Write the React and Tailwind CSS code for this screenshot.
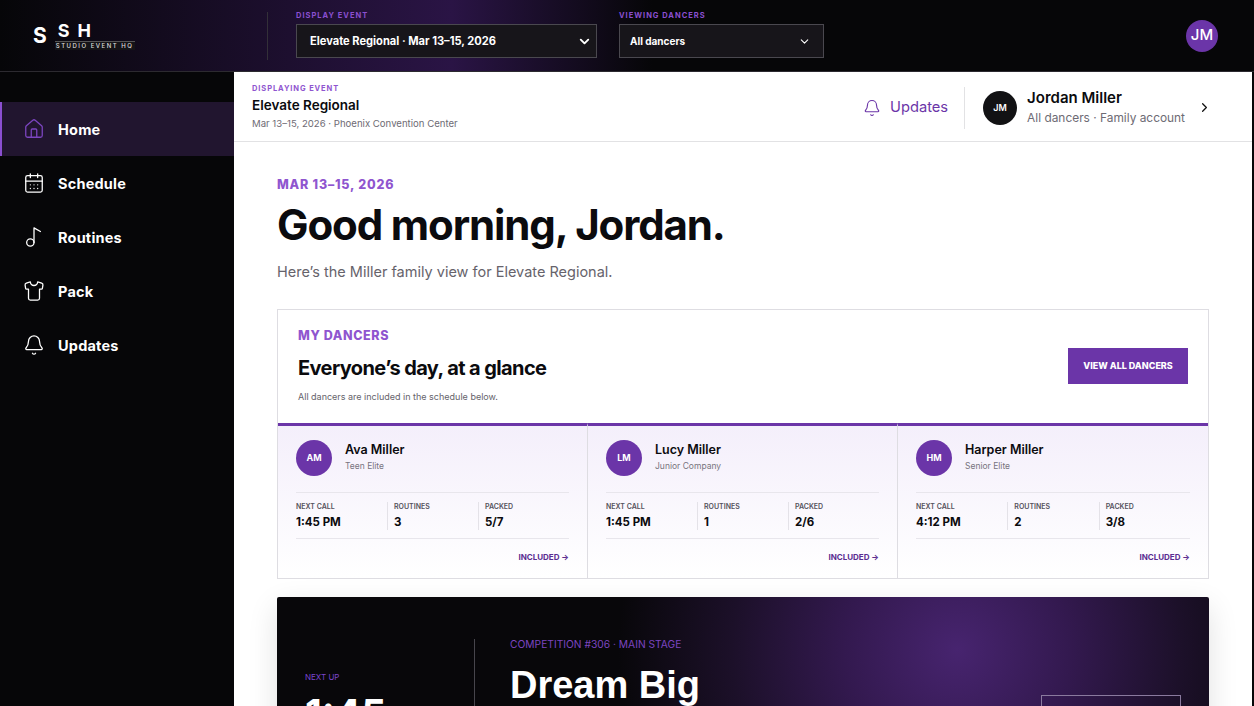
import React from "react";
import { House, CalendarDays, Music2, Shirt, Bell, ChevronDown, ChevronRight } from "lucide-react";

const navItems = [
  { label: "Home", icon: House, active: true },
  { label: "Schedule", icon: CalendarDays },
  { label: "Routines", icon: Music2 },
  { label: "Pack", icon: Shirt },
  { label: "Updates", icon: Bell },
];

const dancers = [
  { initials: "AM", name: "Ava Miller", team: "Teen Elite", call: "1:45 PM", routines: "3", packed: "5/7" },
  { initials: "LM", name: "Lucy Miller", team: "Junior Company", call: "1:45 PM", routines: "1", packed: "2/6" },
  { initials: "HM", name: "Harper Miller", team: "Senior Elite", call: "4:12 PM", routines: "2", packed: "3/8" },
];

const Stat = ({ label, value, first }) => (
  <div className={first ? "" : "border-l border-[#e4e2e8] pl-[6px]"}>
    <div className="text-[7px] leading-[10px] font-semibold text-[#55525c]">{label}</div>
    <div className="mt-[3px] text-[11.5px] leading-[15px] font-bold text-[#0b0b0e]">{value}</div>
  </div>
);

const DancerCard = ({ dancer, last }) => (
  <div className={`border-t-[3px] border-[#6b35a8] bg-gradient-to-b from-[#f4effb] to-white px-[18px] pt-[14px] pb-[16px] ${last ? "" : "border-r border-r-[#dedde2]"}`}>
    <div className="flex items-start gap-[13px]">
      <div className="flex h-9 w-9 items-center justify-center rounded-full bg-[#6b35a8] text-[9px] font-bold text-white">{dancer.initials}</div>
      <div className="pt-px">
        <div className="text-[12.5px] leading-[18px] font-semibold text-[#0b0b0e]">{dancer.name}</div>
        <div className="text-[8.5px] leading-[14px] text-[#77747e]">{dancer.team}</div>
      </div>
    </div>
    <div className="mt-[16px] grid grid-cols-3 border-y border-[#e8e6ec] pt-[9px] pb-[8px]">
      <Stat first label="NEXT CALL" value={dancer.call} />
      <Stat label="ROUTINES" value={dancer.routines} />
      <Stat label="PACKED" value={dancer.packed} />
    </div>
    <div className="mt-[13px] text-right text-[8px] leading-[10px] font-bold text-[#5b2d91]">INCLUDED →</div>
  </div>
);

export default function App() {
  return (
    <div className="flex h-screen flex-col overflow-hidden bg-[#060608] font-['Inter',sans-serif]">
      {/* Top bar */}
      <header className="flex h-[72px] shrink-0 items-center border-b border-[#2c2a30] bg-[linear-gradient(90deg,#060608_0%,#2a1445_36%,#060608_52%,#060608_100%)] pr-[36px]">
        <div className="flex w-[267px] shrink-0 items-center pl-[33px]">
          <span className="text-[21px] leading-none font-bold text-white">S</span>
          <div className="ml-[8px] flex flex-col">
            <span className="pl-[3px] text-[18px] leading-[17px] font-bold tracking-[8px] text-white">SH</span>
            <span className="mt-[2px] w-[80px] border-t border-[#555] bg-[#151417] pl-[1px] text-[6px] leading-[8px] font-medium tracking-[1.5px] whitespace-nowrap text-[#ddd]">STUDIO EVENT HQ</span>
          </div>
        </div>
        <div className="h-[48px] w-px bg-[#333038]" />
        <div className="ml-[28px] w-[301px] pb-[2px]">
          <div className="text-[7.5px] leading-[10px] font-bold tracking-[1px] text-[#8a4fd0]">DISPLAY EVENT</div>
          <div className="mt-[3px] flex h-[34px] items-center justify-between border border-[#4a484f] bg-[#17151a] pr-[4px] pl-[13px]">
            <span className="text-[11.1px] font-bold text-white">Elevate Regional · Mar 13–15, 2026</span>
            <ChevronDown size={15} strokeWidth={3} className="text-white" />
          </div>
        </div>
        <div className="ml-[22px] w-[205px] pb-[2px]">
          <div className="text-[7.5px] leading-[10px] font-bold tracking-[1px] text-[#8a4fd0]">VIEWING DANCERS</div>
          <div className="mt-[3px] flex h-[34px] items-center justify-between border border-[#4a484f] bg-[#17151a] pr-[12px] pl-[10px]">
            <span className="text-[10px] font-bold text-white">All dancers</span>
            <ChevronDown size={13} className="text-white" />
          </div>
        </div>
        <div className="ml-auto flex h-8 w-8 items-center justify-center rounded-full bg-[#6b35a8] text-[15px] font-medium text-white">JM</div>
      </header>

      <div className="flex min-h-0 flex-1 pr-[2px]">
        {/* Sidebar */}
        <aside className="w-[234px] shrink-0 bg-[#060608] pt-[30px]">
          {navItems.map((item) => {
            const Icon = item.icon;
            return (
              <div
                key={item.label}
                className={`flex h-[54px] items-center gap-[13px] ${item.active ? "border-l-2 border-[#8a4fd0] bg-[#21152f] pl-[21px]" : "pl-[23px]"}`}
              >
                <Icon size={22} strokeWidth={1.4} className={item.active ? "text-[#7c45c0]" : "text-white"} />
                <span className="pt-[2px] text-[14.5px] font-bold tracking-[0.2px] text-white">{item.label}</span>
              </div>
            );
          })}
        </aside>

        <main className="min-w-0 flex-1 overflow-hidden bg-white">
          {/* Event strip */}
          <div className="flex h-[70px] items-center justify-between border-b border-[#e2e2e4] pr-[40px] pl-[18px]">
            <div className="pt-px">
              <div className="text-[7.5px] leading-[10px] font-bold tracking-[0.9px] text-[#8f55cf]">DISPLAYING EVENT</div>
              <div className="mt-[1px] text-[13.5px] leading-[20px] font-semibold text-[#0b0b0e]">Elevate Regional</div>
              <div className="mt-[2px] text-[9.6px] leading-[14px] text-[#6e6b74]">Mar 13–15, 2026 · Phoenix Convention Center</div>
            </div>
            <div className="flex items-center pt-[2px]">
              <Bell size={18} strokeWidth={1.5} className="text-[#6b35a8]" />
              <span className="ml-[9px] text-[14.7px] text-[#6b35a8]">Updates</span>
              <div className="ml-[16px] h-[42px] w-px bg-[#e2e2e4]" />
              <div className="ml-[18px] flex h-[34px] w-[34px] items-center justify-center rounded-full bg-[#121214] text-[9px] font-semibold text-white">JM</div>
              <div className="ml-[10px]">
                <div className="text-[15px] leading-[20px] font-semibold text-[#0b0b0e]">Jordan Miller</div>
                <div className="mt-px text-[11.9px] leading-[18px] text-[#6e6b74]">All dancers · Family account</div>
              </div>
              <ChevronRight size={15} strokeWidth={2} className="ml-[12px] text-[#111]" />
            </div>
          </div>

          <div className="px-[43px] pt-[35px]">
            <div className="text-[12.5px] leading-[16px] font-extrabold tracking-[0.8px] text-[#8f55cf]">MAR 13–15, 2026</div>
            <h1 className="mt-[7px] text-[42px] leading-[50px] font-bold tracking-[-1.12px] text-[#0b0b0e]">Good morning, Jordan.</h1>
            <p className="mt-[12px] text-[14.5px] leading-[20px] text-[#66636b]">Here’s the Miller family view for Elevate Regional.</p>

            {/* My dancers */}
            <section className="mt-[27px] border border-[#dedde2]">
              <div className="flex items-center justify-between px-5 pt-[18px] pb-[19px]">
                <div>
                  <div className="text-[12.5px] leading-[16px] font-extrabold tracking-[0.6px] text-[#8f55cf]">MY DANCERS</div>
                  <h2 className="mt-[11px] text-[20px] leading-[26px] font-bold tracking-[-0.6px] text-[#0b0b0e]">Everyone’s day, at a glance</h2>
                  <p className="mt-[9px] text-[9px] leading-[14px] text-[#66636b]">All dancers are included in the schedule below.</p>
                </div>
                <div className="flex h-9 w-[120px] items-center justify-center bg-[#6b35a8] text-[9px] font-extrabold text-white">VIEW ALL DANCERS</div>
              </div>
              <div className="grid grid-cols-3">
                {dancers.map((dancer, i) => (
                  <DancerCard key={dancer.initials} dancer={dancer} last={i === dancers.length - 1} />
                ))}
              </div>
            </section>

            {/* Next up */}
            <section className="mt-[18px] flex h-[240px] rounded-[2px] bg-[#08070a] bg-[radial-gradient(circle_at_73%_22%,#47246f_0%,#33194f_16%,#1c1029_32%,#08070a_48%)] py-[42px] shadow-[0_10px_30px_rgba(0,0,0,0.12)]">
              <div className="w-[198px] shrink-0 border-r border-[#47454c] pt-[32px] pl-[28px]">
                <div className="text-[8px] leading-[12px] text-[#7a45cc]">NEXT UP</div>
                <div className="mt-[9px] text-[39px] leading-[44px] font-bold text-white">1:45</div>
              </div>
              <div className="flex flex-1 items-start justify-between pr-[28px] pl-[35px]">
                <div>
                  <div className="-mt-[2px] text-[10.25px] leading-[14px] text-[#7c45c0]">COMPETITION #306 · MAIN STAGE</div>
                  <div className="mt-[12px] font-['Liberation_Sans',sans-serif] text-[38px] leading-[44px] font-bold text-white">Dream Big</div>
                </div>
                <div className="mt-[56px] h-[40px] w-[140px] border border-[#8a7a9e]" />
              </div>
            </section>
          </div>
        </main>
      </div>
    </div>
  );
}
